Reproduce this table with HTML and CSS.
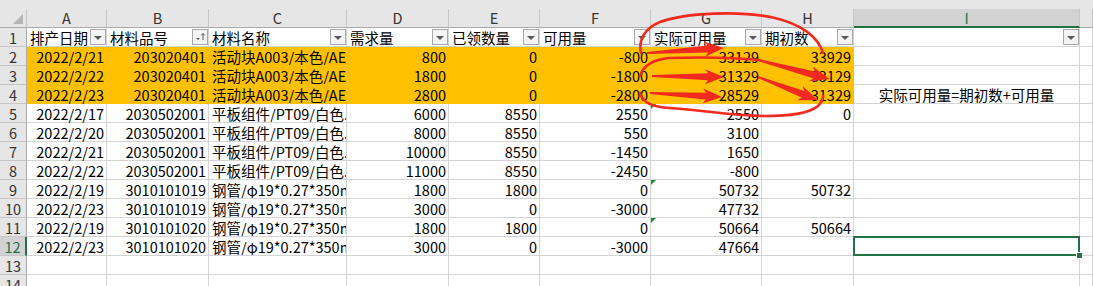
FILE: index.html
```html
<!DOCTYPE html>
<html lang="zh">
<head>
<meta charset="utf-8">
<link rel="stylesheet" href="styles.css">
</head>
<body>
<div class="sheet">
  <div class="topstrip"></div>
  <div class="row hdr">
    <div class="corner"><svg width="12" height="12" viewBox="0 0 12 12"><polygon points="1,11 11,11 11,1" fill="#b5b5b5"/></svg></div>
    <div class="ch">A</div><div class="ch">B</div><div class="ch">C</div><div class="ch">D</div><div class="ch">E</div><div class="ch">F</div><div class="ch">G</div><div class="ch">H</div><div class="ch sel">I</div><div class="ch"></div>
  </div>
  <div class="row">
    <div class="rh">1</div>
    <div class="c f"><span>排产日期</span><i class="fb"><b class="dn"></b></i></div>
    <div class="c f"><span>材料品号</span><i class="fb"><svg width="14" height="14" viewBox="0 0 14 14"><polygon points="3,8 7,8 5,10" fill="#555"/><path d="M10 3.5 V10 M8.3 5.3 L10 3.5 L11.7 5.3" stroke="#555" stroke-width="1" fill="none"/></svg></i></div>
    <div class="c f"><span>材料名称</span><i class="fb"><b class="dn"></b></i></div>
    <div class="c f"><span>需求量</span><i class="fb"><b class="dn"></b></i></div>
    <div class="c f"><span>已领数量</span><i class="fb"><b class="dn"></b></i></div>
    <div class="c f"><span>可用量</span><i class="fb"><b class="dn"></b></i></div>
    <div class="c f"><span>实际可用量</span><i class="fb"><b class="dn"></b></i></div>
    <div class="c f"><span>期初数</span><i class="fb"><b class="dn"></b></i></div>
    <div class="c f"><span></span><i class="fb"><b class="dn"></b></i></div>
    <div class="c"></div>
  </div>
  <div class="row">
    <div class="rh">2</div>
    <div class="c n o">2022/2/21</div><div class="c n o">203020401</div><div class="c o clip">活动块A003/本色/AE</div><div class="c n o">800</div><div class="c n o">0</div><div class="c n o">-800</div><div class="c n o">33129</div><div class="c n o">33929</div><div class="c"></div><div class="c"></div>
  </div>
  <div class="row">
    <div class="rh">3</div>
    <div class="c n o">2022/2/22</div><div class="c n o">203020401</div><div class="c o clip">活动块A003/本色/AE</div><div class="c n o">1800</div><div class="c n o">0</div><div class="c n o">-1800</div><div class="c n o">31329</div><div class="c n o">33129</div><div class="c"></div><div class="c"></div>
  </div>
  <div class="row">
    <div class="rh">4</div>
    <div class="c n o">2022/2/23</div><div class="c n o">203020401</div><div class="c o clip">活动块A003/本色/AE</div><div class="c n o">2800</div><div class="c n o">0</div><div class="c n o">-2800</div><div class="c n o">28529</div><div class="c n o">31329</div><div class="c ctr">实际可用量=期初数+可用量</div><div class="c"></div>
  </div>
  <div class="row">
    <div class="rh">5</div>
    <div class="c n">2022/2/17</div><div class="c n">2030502001</div><div class="c clip">平板组件/PT09/白色...</div><div class="c n">6000</div><div class="c n">8550</div><div class="c n">2550</div><div class="c n tri">2550</div><div class="c n">0</div><div class="c"></div><div class="c"></div>
  </div>
  <div class="row">
    <div class="rh">6</div>
    <div class="c n">2022/2/20</div><div class="c n">2030502001</div><div class="c clip">平板组件/PT09/白色...</div><div class="c n">8000</div><div class="c n">8550</div><div class="c n">550</div><div class="c n">3100</div><div class="c n"></div><div class="c"></div><div class="c"></div>
  </div>
  <div class="row">
    <div class="rh">7</div>
    <div class="c n">2022/2/21</div><div class="c n">2030502001</div><div class="c clip">平板组件/PT09/白色...</div><div class="c n">10000</div><div class="c n">8550</div><div class="c n">-1450</div><div class="c n">1650</div><div class="c n"></div><div class="c"></div><div class="c"></div>
  </div>
  <div class="row">
    <div class="rh">8</div>
    <div class="c n">2022/2/22</div><div class="c n">2030502001</div><div class="c clip">平板组件/PT09/白色...</div><div class="c n">11000</div><div class="c n">8550</div><div class="c n">-2450</div><div class="c n">-800</div><div class="c n"></div><div class="c"></div><div class="c"></div>
  </div>
  <div class="row">
    <div class="rh">9</div>
    <div class="c n">2022/2/19</div><div class="c n">3010101019</div><div class="c clip">钢管/φ19*0.27*350mm</div><div class="c n">1800</div><div class="c n">1800</div><div class="c n">0</div><div class="c n tri">50732</div><div class="c n">50732</div><div class="c"></div><div class="c"></div>
  </div>
  <div class="row">
    <div class="rh">10</div>
    <div class="c n">2022/2/23</div><div class="c n">3010101019</div><div class="c clip">钢管/φ19*0.27*350mm</div><div class="c n">3000</div><div class="c n">0</div><div class="c n">-3000</div><div class="c n">47732</div><div class="c n"></div><div class="c"></div><div class="c"></div>
  </div>
  <div class="row">
    <div class="rh">11</div>
    <div class="c n">2022/2/19</div><div class="c n">3010101020</div><div class="c clip">钢管/φ19*0.27*350mm</div><div class="c n">1800</div><div class="c n">1800</div><div class="c n">0</div><div class="c n tri">50664</div><div class="c n">50664</div><div class="c"></div><div class="c"></div>
  </div>
  <div class="row">
    <div class="rh rsel">12</div>
    <div class="c n">2022/2/23</div><div class="c n">3010101020</div><div class="c clip">钢管/φ19*0.27*350mm</div><div class="c n">3000</div><div class="c n">0</div><div class="c n">-3000</div><div class="c n">47664</div><div class="c n"></div><div class="c active"></div><div class="c"></div>
  </div>
  <div class="row">
    <div class="rh">13</div>
    <div class="c"></div><div class="c"></div><div class="c"></div><div class="c"></div><div class="c"></div><div class="c"></div><div class="c"></div><div class="c"></div><div class="c"></div><div class="c"></div>
  </div>
  <div class="row">
    <div class="rh">14</div>
    <div class="c"></div><div class="c"></div><div class="c"></div><div class="c"></div><div class="c"></div><div class="c"></div><div class="c"></div><div class="c"></div><div class="c"></div><div class="c"></div>
  </div>

  <svg class="marks" width="1093" height="286" viewBox="0 0 1093 286">
    <g fill="none" stroke="#f22a1e" stroke-width="2.6" stroke-linecap="round">
      <path d="M641,53 C638,40 645,28 660,22 C685,13 740,10 775,18 C800,24 818,36 823,53"/>
      <path d="M640,76 C643,66 652,60 668,58 C700,57 740,58 760,60"/>
      <path d="M640,93 C643,103 652,107 670,108 C700,110 735,116 765,116 C790,116 808,114 818,106 C822,102 823,98 823,96"/>
    </g>
    <g fill="#f22a1e">
      <path transform="translate(647,53) rotate(-3.7)" d="M0,-1 L61,-3.5 L58,-7.5 L77,0 L58,7.5 L61,3.5 L0,1 Z"/>
      <path transform="translate(652,76) rotate(0.8)" d="M0,-1 L56,-3.5 L53,-7.5 L72,0 L53,7.5 L56,3.5 L0,1 Z"/>
      <path transform="translate(650,93) rotate(3.2)" d="M0,-1 L56,-3.5 L53,-7.5 L72,0 L53,7.5 L56,3.5 L0,1 Z"/>
      <path transform="translate(758,60) rotate(14.8)" d="M0,-1 L58,-3.5 L55,-7.5 L74,0 L55,7.5 L58,3.5 L0,1 Z"/>
      <path transform="translate(758,77) rotate(21)" d="M0,-1 L48,-3.5 L45,-7.5 L64,0 L45,7.5 L48,3.5 L0,1 Z"/>
    </g>
  </svg>
</div>
</body>
</html>
```
FILE: styles.css
```css
html, body {
  margin: 0;
  padding: 0;
  background: #ffffff;
}
.sheet {
  position: relative;
  width: 1093px;
  height: 286px;
  overflow: hidden;
  font-family: "Noto Sans CJK SC", "Liberation Sans", sans-serif;
  font-size: 14.5px;
  color: #000;
}
.topstrip {
  height: 9px;
  background: #e6e6e6;
}
.row {
  display: grid;
  grid-template-columns: 27px 80px 102px 138px 102px 91px 111px 111px 92px 226px 13px;
  height: 19px;
}
.row > div {
  box-sizing: border-box;
  height: 19px;
  white-space: nowrap;
  line-height: 19px;
}
.row > .clip {
  overflow: hidden;
}
.hdr > div {
  background: #e6e6e6;
  border-right: 1px solid #c6c6c6;
  border-bottom: 1px solid #ababab;
  text-align: center;
  color: #333;
  line-height: 18px;
}
.hdr .corner {
  display: flex;
  align-items: flex-end;
  justify-content: flex-end;
  padding: 0 2px 2px 0;
}
.hdr .sel {
  background: #d2d2d2;
  color: #217346;
  border-bottom: 2px solid #217346;
}
.rh {
  background: #e6e6e6;
  border-right: 1px solid #ababab;
  border-bottom: 1px solid #c6c6c6;
  text-align: center;
  color: #333;
}
.rh.rsel {
  background: #d2d2d2;
  color: #217346;
  border-right: 2px solid #217346;
}
.c {
  border-right: 1px solid #d4d4d4;
  border-bottom: 1px solid #d4d4d4;
  padding: 0 3px;
}
.c.n {
  text-align: right;
  padding: 0 2px 0 0;
}
.c.o {
  background: #ffc000;
  border-color: #ffc000;
}
.c.ctr {
  text-align: center;
  padding: 0;
}
.c.f {
  display: flex;
  justify-content: space-between;
  align-items: flex-start;
  padding: 0 0 0 3px;
}
.fb {
  flex: none;
  box-sizing: border-box;
  width: 16px;
  height: 16px;
  margin-top: 1px;
  border: 1px solid #a9a9a9;
  background: #f4f4f4;
  display: flex;
  align-items: center;
  justify-content: center;
}
.fb .dn {
  width: 0;
  height: 0;
  border-left: 4px solid transparent;
  border-right: 4px solid transparent;
  border-top: 4px solid #595959;
  margin-top: 1px;
}
.tri {
  position: relative;
}
.tri::before {
  content: "";
  position: absolute;
  left: 0;
  top: 0;
  border-top: 5px solid #1f8a3a;
  border-right: 5px solid transparent;
}
.row > .active {
  position: relative;
  z-index: 2;
}
.active::after {
  content: "";
  position: absolute;
  left: -1px;
  top: -1px;
  right: -1px;
  bottom: -1px;
  border: 2px solid #217346;
}
.active::before {
  content: "";
  position: absolute;
  right: -4px;
  bottom: -4px;
  width: 5px;
  height: 5px;
  background: #217346;
  border: 1px solid #fff;
  z-index: 3;
}
.marks {
  position: absolute;
  left: 0;
  top: 0;
  pointer-events: none;
}
```
